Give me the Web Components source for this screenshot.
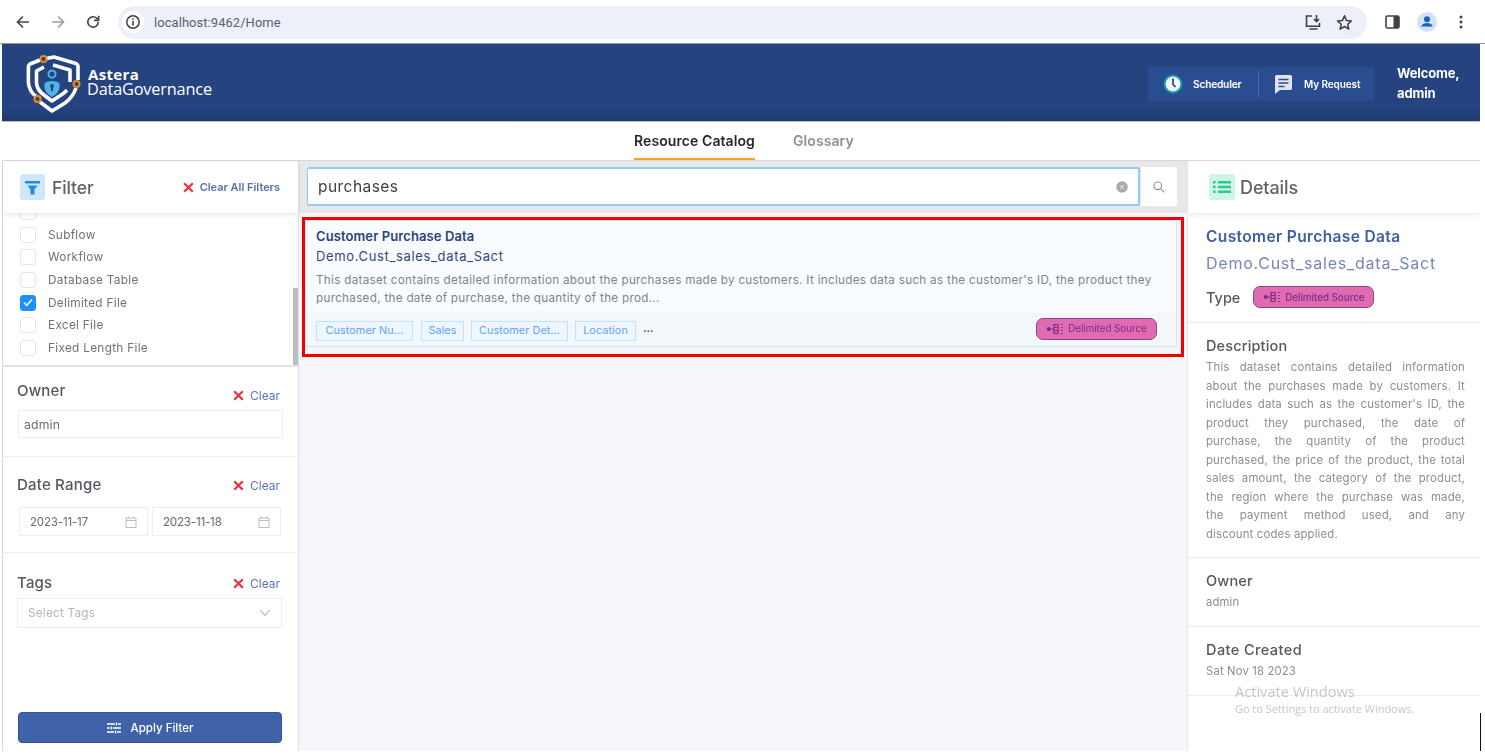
<!DOCTYPE html>
<html lang="en"><head><meta charset="utf-8"><title>Astera Data Governance</title>
<style>
html,body{margin:0;padding:0;background:#fff;overflow:hidden}
body{font-family:Inter,"Open Sans",sans-serif;color:#555}
</style></head><body>
<x-app>
  <x-browser-bar slot="bar" url="localhost:9462/Home"></x-browser-bar>
  <x-app-header slot="header"></x-app-header>
  <x-tabs slot="tabs"></x-tabs>
  <x-filter-panel slot="left"></x-filter-panel>
  <x-results slot="center"></x-results>
  <x-details slot="right"></x-details>
</x-app>
<script>
const def=(tag,html,init)=>customElements.define(tag,class extends HTMLElement{
  constructor(){super();this.attachShadow({mode:'open'}).innerHTML=html;}
  connectedCallback(){if(init)init(this,this.shadowRoot);}
});
const srcIcon=`<svg width="18" height="12" viewBox="0 0 18 12" fill="none" stroke="currentColor" stroke-width="1.2"><circle cx="2.6" cy="6" r="2" fill="currentColor" stroke="none"/><path d="M4 6h4M8 1.5h4v9H8zM8 4.5h4M8 7.5h4M15 1.5h1.6M15 4.5h1.6M15 7.5h1.6M15 10.5h1.6"/></svg>`;

def('x-app',`<style>
:host{display:block;width:1485px;height:755px;position:relative;background:#fff;overflow:hidden}
.wrap{height:751px;display:flex;flex-direction:column;filter:blur(.3px)}
.page{flex:1;min-height:0;margin:0 5px 0 2px;display:flex;flex-direction:column}
.main{flex:1;min-height:0;display:grid;grid-template-columns:296px 889px 293px;border-top:1px solid #d5d8df}
.wm{position:absolute;left:1235px;top:682px;color:#c6c6c8;font-family:"Open Sans",sans-serif}
.wm b{display:block;font-weight:400;font-size:14.6px;line-height:18px}
.wm i{display:block;font-style:normal;font-size:10.95px;line-height:16px;margin-top:1px}
.line{position:absolute;left:1479.5px;top:713px;width:1.5px;height:38px;background:#111}
</style><div class="wrap"><slot name="bar"></slot><div class="page"><slot name="header"></slot><slot name="tabs"></slot>
<div class="main"><slot name="left"></slot><slot name="center"></slot><slot name="right"></slot></div></div></div>
<div class="wm"><b>Activate Windows</b><i>Go to Settings to activate Windows.</i></div><div class="line"></div>`);

def('x-browser-bar',`<style>
:host{display:flex;align-items:center;height:43px;box-sizing:content-box;background:#fff;border-bottom:1px solid #8f939b}
.nav{width:35px;display:flex;justify-content:center;flex:none}
.left{display:flex;padding-left:5px;width:118px;box-sizing:border-box;flex:none}
.omni{width:1249px;height:33px;background:#edf0f8;border-radius:17px;display:flex;align-items:center;flex:none;margin-top:1px}
.info{width:22px;height:22px;border-radius:50%;background:#fff;margin-left:4px;display:flex;align-items:center;justify-content:center}
.url{font:12.9px Roboto,sans-serif;color:#5c5f66;margin-left:10px;flex:1;letter-spacing:.1px}
.ico{display:flex;width:31px;justify-content:center}
.r{display:flex;align-items:center;flex:none}
</style>
<div class="left">
<span class="nav"><svg width="16" height="16" viewBox="0 0 16 16" fill="none" stroke="#45484e" stroke-width="1.7"><path d="M14 8H2.5M8 2.5 2.5 8 8 13.5"/></svg></span>
<span class="nav"><svg width="16" height="16" viewBox="0 0 16 16" fill="none" stroke="#9a9ca1" stroke-width="1.6"><path d="M2 8h11.5M8 2.5 13.5 8 8 13.5"/></svg></span>
<span class="nav"><svg width="16" height="16" viewBox="0 0 16 16" fill="none" stroke="#45484e" stroke-width="1.7"><path d="M13.2 8A5.2 5.2 0 1 1 11.6 4.2L13.4 6"/><path d="M13.6 1.8v4.6H9" /></svg></span>
</div>
<div class="omni"><span class="info"><svg width="16" height="16" viewBox="0 0 16 16"><circle cx="8" cy="8" r="6.2" fill="none" stroke="#3d4046" stroke-width="1.5"/><path d="M7.2 7h1.6v4.6H7.2zM7.2 4.2h1.6v1.6H7.2z" fill="#3d4046"/></svg></span>
<span class="url" id="u"></span>
<span class="ico"><svg width="19" height="17" viewBox="0 0 19 17" fill="none" stroke="#3d4046" stroke-width="1.6"><path d="M8 2H2.5v10.2h13V9M5.5 15h8" /><path d="M12.5 1v6M10 5l2.5 2.6L15 5"/></svg></span>
<span class="ico" style="margin-right:7px"><svg width="17" height="17" viewBox="0 0 17 17" fill="none" stroke="#3d4046" stroke-width="1.5" stroke-linejoin="round"><path d="M8.5 1.8 10.5 6.4 15.5 6.9 11.7 10.2 12.9 15.1 8.5 12.5 4.1 15.1 5.3 10.2 1.5 6.9 6.5 6.4z"/></svg></span></div>
<div class="r" style="margin-left:18px"><svg width="15" height="14" viewBox="0 0 15 14"><rect x="1" y="1" width="13" height="12" rx="1.5" fill="none" stroke="#3d4046" stroke-width="1.6"/><rect x="8.5" y="1" width="5.5" height="12" fill="#3d4046"/></svg></div>
<div class="r" style="margin-left:17px"><svg width="20" height="20" viewBox="0 0 20 20"><circle cx="10" cy="10" r="10" fill="#d3e2fb"/><circle cx="10" cy="7.3" r="3" fill="#1c5fc4"/><path d="M4.2 14.5c1-2.6 3.4-3.4 5.8-3.4s4.8.8 5.8 3.4z" fill="#1c5fc4"/></svg></div>
<div class="r" style="margin-left:22px"><svg width="4" height="14" viewBox="0 0 4 14" fill="#3d4046"><circle cx="2" cy="2" r="1.5"/><circle cx="2" cy="7" r="1.5"/><circle cx="2" cy="12" r="1.5"/></svg></div>`,
(el,s)=>{s.getElementById('u').textContent=el.getAttribute('url');});

def('x-app-header',`<style>
:host{display:flex;align-items:center;height:78px;background:linear-gradient(#24437f 0,#24437f 84%,#1f3a70 100%);color:#fff;border-bottom:1px solid #b9bcc4;box-sizing:border-box}
.logo{margin-left:22px;display:block;flex:none}
.brand{margin-left:3px;margin-top:-1px;font-family:"Open Sans",sans-serif;line-height:1;flex:1}
.brand b{display:block;font-size:15px;font-weight:700;letter-spacing:.35px;line-height:14px;margin-left:1px}
.brand span{display:block;font-size:16.3px;font-weight:400;letter-spacing:-.17px;line-height:16px}
.actions{display:flex;align-items:center;width:226px;height:34px;background:#2a4d92;border-radius:3px;font-size:10px;font-weight:600;letter-spacing:-.1px;margin-top:3px}
.a1{display:flex;align-items:center;width:110px;padding-left:15px;box-sizing:border-box;gap:10px}
.div{width:1px;height:26px;background:#4f6ca6}
.a2{display:flex;align-items:center;padding-left:16px;gap:12px}
.welcome{width:83px;margin-left:23px;box-sizing:border-box;font-size:13px;font-weight:700;line-height:20px;margin-top:1px;letter-spacing:-.15px}
</style>
<svg class="logo" width="60" height="62" viewBox="0 0 60 62" fill="none" stroke="#fff" stroke-width="3.6" stroke-linejoin="round">
<path d="M16 8 6 12Q4.400 13 4.400 15V30Q5 40 13 45"/><path d="M22 6.500 30 5 52 11.500Q54 12.500 54 14V28"/><path d="M16 50 28 59 41 51Q49 45 52 36"/>
<path d="M20 15 12.500 19V31Q13 38 20 43L28 49 40 41 43 38"/><path d="M29 13 46 18V30"/>
<circle cx="19.500" cy="7" r="3" stroke="#ee8a22" stroke-width="2" fill="#24437f"/><circle cx="52.500" cy="32" r="3" stroke="#ee8a22" stroke-width="2" fill="#24437f"/><circle cx="13.500" cy="47" r="3" stroke="#ee8a22" stroke-width="2" fill="#24437f"/>
<circle cx="28" cy="22" r="3.600" stroke="#4fb4e8" stroke-width="2"/><path d="M20.500 31Q28 27 35.500 31V36Q34 42 28 45Q22 42 20.500 36Z" fill="#4fb4e8" stroke="none"/><circle cx="28" cy="34" r="2" fill="#24437f" stroke="none"/><path d="M27 34h2v5h-2z" fill="#24437f" stroke="none"/></svg>
<div class="brand"><b>Astera</b><span>DataGovernance</span></div>
<div class="actions"><div class="a1"><svg width="20" height="20" viewBox="0 0 20 20"><circle cx="10" cy="10" r="8.500" fill="#eef6f6" stroke="#0f9aa6" stroke-width="2"/><path d="M10 4.500V10.500L12.500 13" fill="none" stroke="#17305f" stroke-width="1.500"/></svg><span>Scheduler</span></div><div class="div"></div>
<div class="a2"><svg width="17" height="19" viewBox="0 0 17 19"><path d="M1.500 0h14A1.500 1.500 0 0 1 17 1.500v12a1.500 1.500 0 0 1-1.500 1.500H5L0 19V1.500A1.500 1.500 0 0 1 1.500 0z" fill="#dfe4ee"/><path d="M3.500 4.500h10M3.500 8h10M3.500 11.500h6" stroke="#2a4d92" stroke-width="1.300"/></svg><span>My Request</span></div></div>
<div class="welcome">Welcome,<br>admin</div>`);

def('x-tabs',`<style>
:host{display:flex;height:38px;justify-content:flex-start;background:#fff;font-size:14px;font-weight:600;letter-spacing:.08px}
.t{height:36px;line-height:38px;color:#26282c;margin-left:632px;width:121px;text-align:center;border-bottom:2px solid #f5a72c;white-space:nowrap}
.g{color:#8d9096;margin-left:38px;line-height:38px}
</style><div class="t">Resource Catalog</div><div class="g">Glossary</div>`);

def('x-clear',`<style>
:host{display:inline-flex;align-items:center;gap:6px;font-size:12px;color:#5a76ad}
svg{display:block}
</style><svg width="11" height="11" viewBox="0 0 11 11"><path d="M1.200 1.200 9.800 9.800M9.800 1.200 1.200 9.800" stroke="#e8363c" stroke-width="2.300"/></svg><slot></slot>`);

def('x-check',`<style>
:host{display:flex;align-items:center;height:22.6px;font-size:11.800px;color:#6d717c;padding-left:17px;letter-spacing:.3px}
.b{width:16px;height:16px;box-sizing:border-box;border:1px solid #e4e5e8;border-radius:3px;margin-right:12px;background:#fff;flex:none;display:flex;align-items:center;justify-content:center}
:host([checked]) .b{background:#1f8ffa;border-color:#1f8ffa}
svg{display:none}
:host([checked]) svg{display:block}
</style><span class="b"><svg width="10" height="9" viewBox="0 0 10 9" fill="none" stroke="#fff" stroke-width="1.600"><path d="M1 4.500 3.800 7.300 9 1.500"/></svg></span><slot></slot>`);

def('x-filter-section',`<style>
:host{display:block;padding:var(--pt,13px) 15px var(--pb,0) 14px;border-bottom:var(--bb,1px solid #eeeef0);height:var(--h);box-sizing:border-box}
.h{display:flex;justify-content:space-between;align-items:center;height:20px;font-size:15px;font-weight:500;color:#55585e;letter-spacing:.2px;padding-right:3px}
.b{margin-top:var(--gap,10px)}
x-clear{padding-top:var(--cs,0);letter-spacing:0;font-weight:400}
</style><div class="h"><slot name="label"></slot><x-clear>Clear</x-clear></div><div class="b"><slot></slot></div>`);

def('x-field',`<style>
:host{display:flex;align-items:center;justify-content:space-between;box-sizing:border-box;height:var(--fh,28px);border:1px solid #eceef0;background:#fff;padding:var(--fp,0 5px);font-size:var(--fs,12.200px);color:#666a72;letter-spacing:var(--ls,.2px);margin-left:var(--ml,1px);width:var(--w,265px)}
</style><slot></slot><slot name="end"></slot>`);

def('x-filter-panel',`<style>
:host{display:flex;flex-direction:column;min-height:0;background:#fff;border-left:1px solid #d3d9ea;box-shadow:1px 0 0 #dfe1e6;position:relative;z-index:1;box-sizing:border-box;height:100%}
.head{height:52px;flex:none;display:flex;align-items:center;padding:0 18px 0 17px;box-shadow:0 2px 4px rgba(60,60,70,.12);position:relative;z-index:1;background:#fff;border-radius:0 0 3px 3px}
.fi{width:25px;height:26px;background:#cfe6fb;border-radius:3px;display:flex;align-items:center;justify-content:center;flex:none}
.ti{font-size:17.500px;font-weight:500;color:#5f6268;margin-left:7px;flex:1;letter-spacing:-.1px}
.ca{font-size:11px;font-weight:600;color:#5570ac;letter-spacing:-.02px}
.list{height:152px;flex:none;display:flex;overflow:hidden;border-bottom:2px solid #e4e4e6;box-sizing:content-box}
.rows{flex:1;margin-top:-12px}
.track{width:5px;flex:none}
.thumb{width:5px;height:77px;margin-top:75px;background:#bbbdc2}
.dates{display:flex;gap:4px;margin-left:2px;--fh:29px;--w:129px;--ml:0;--fp:0 10px;--fs:11.500px;--ls:-.15px}
.cal{display:block}
.sel{color:#b4b7bc;--fh:30px;--w:265px;--ml:0;--fp:0 10px;--fs:11.800px}
.grow{flex:1;display:flex;flex-direction:column;justify-content:flex-end;min-height:0;padding:0 16px 8px 15px}
.btn{height:31px;background:#3f62a8;border:1px solid #35548f;border-radius:4px;color:#fff;display:flex;align-items:center;justify-content:center;gap:10px;font-size:11.500px;font-weight:500;box-sizing:border-box}
</style>
<div class="head"><span class="fi"><svg width="15" height="15" viewBox="0 0 15 15" fill="#1d8fe0"><path d="M0 1h15v2.500H0zM2.500 5.500h10L9.500 9.500v5h-4v-5z"/></svg></span><span class="ti">Filter</span>
<x-clear class="ca">Clear All Filters</x-clear></div>
<div class="list"><div class="rows"><x-check></x-check><x-check>Subflow</x-check><x-check>Workflow</x-check><x-check>Database Table</x-check><x-check checked>Delimited File</x-check><x-check>Excel File</x-check><x-check>Fixed Length File</x-check></div><div class="track"><div class="thumb"></div></div></div>
<x-filter-section style="--pt:13px;--gap:10px;--h:90px;--cs:10px"><span slot="label">Owner</span><x-field>admin</x-field></x-filter-section>
<x-filter-section style="--pt:17px;--gap:13px;--h:96px;--cs:2px"><span slot="label">Date Range</span><div class="dates">
<x-field>2023-11-17<svg slot="end" class="cal" width="12" height="12" viewBox="0 0 12 12" fill="none" stroke="#bcbec4"><path d="M1 2h10v9.500H1zM1 4.500h10M3.500 .5v2M8.500 .5v2"/></svg></x-field>
<x-field>2023-11-18<svg slot="end" class="cal" width="12" height="12" viewBox="0 0 12 12" fill="none" stroke="#bcbec4"><path d="M1 2h10v9.500H1zM1 4.500h10M3.500 .5v2M8.500 .5v2"/></svg></x-field></div></x-filter-section>
<x-filter-section style="--pt:19px;--gap:6px;--bb:0;--cs:2px"><span slot="label">Tags</span><x-field class="sel">Select Tags<svg slot="end" width="12" height="8" viewBox="0 0 12 8" fill="none" stroke="#b9bbc0" stroke-width="1.100"><path d="M1 1.200 6 6.500 11 1.200"/></svg></x-field></x-filter-section>
<div class="grow"><div class="btn"><svg width="14" height="12" viewBox="0 0 14 12" fill="none" stroke="#fff" stroke-width="1.300"><path d="M0 2h8M11 2h3M0 6h3M6 6h8M0 10h7M10 10h4M9.500 .5v3M4.500 4.500v3M8.500 8.500v3"/></svg>Apply Filter</div></div>`);

def('x-tag',`<style>
:host{display:inline-flex;align-items:center;justify-content:center;height:20px;box-sizing:border-box;background:#eef7ff;border:1px solid #bfe2fb;color:#65a3ef;font-size:10.800px;letter-spacing:.1px;white-space:nowrap}
</style><slot></slot>`);

def('x-badge',`<style>
:host{display:inline-flex;align-items:center;justify-content:center;gap:4px;width:121px;height:22px;box-sizing:border-box;background:#e06bb0;border:1.500px solid #8c4390;border-radius:7px;color:#7a2c86;font-size:9.800px;white-space:nowrap;letter-spacing:-.02px}
</style>${srcIcon}<slot></slot>`);

def('x-result-card',`<style>
:host{display:flex;flex-direction:column;height:127px;box-sizing:border-box;border:1px solid #cfe6f6;background:#f9fcfe}
.top{flex:1;padding:7px 10px 0}
.t{font-size:13px;font-weight:600;line-height:16px;color:#2d4279;letter-spacing:.1px}
.s{font-size:13px;line-height:16px;color:#34477f;margin-top:4px;letter-spacing:.65px;white-space:nowrap}
.d{font-size:11.700px;line-height:18px;color:#7f838b;margin-top:7px;white-space:nowrap;letter-spacing:.29px}
.foot{height:33px;flex:none;background:#f3f7f9;display:flex;align-items:center;padding:2px 19px 0 10px;box-sizing:border-box;gap:7px}
.more{color:#555;font-size:11px;font-weight:600;flex:1;margin-top:-5px}
x-badge{margin-top:-4px}
</style>
<div class="top"><div class="t">Customer Purchase Data</div><div class="s">Demo.Cust_sales_data_Sact</div>
<div class="d">This dataset contains detailed information about the purchases made by customers. It includes data such as the customer's ID, the product they<br>purchased, the date of purchase, the quantity of the prod...</div></div>
<div class="foot"><x-tag style="width:97px;margin-right:1px">Customer Nu...</x-tag><x-tag style="width:43px">Sales</x-tag><x-tag style="width:97px">Customer Det...</x-tag><x-tag style="width:61px">Location</x-tag><span class="more">...</span><x-badge>Delimited Source</x-badge></div>`);

def('x-results',`<style>
:host{display:flex;flex-direction:column;background:#f5f6f9;min-height:0}
.bar{height:52px;flex:none;background:#e8e8e9;padding:6px 10px 7px 9px;display:flex;box-sizing:border-box}
.in{width:833px;height:39px;box-sizing:border-box;border:2px solid #95c9f8;border-left-width:1px;background:#fff;border-radius:2px;display:flex;align-items:center;padding:0 10px;font-size:15.500px;color:#3c3f45;justify-content:space-between;letter-spacing:.45px}
.go{width:36px;height:39px;margin-left:1px;background:#fff;display:flex;align-items:center;justify-content:center;border-radius:0 2px 2px 0}
.hit{margin:4px 0 0 4px;width:882px;height:140px;box-sizing:border-box;border:3px solid #f40000;padding:0 4px 7px 0}
</style>
<div class="bar"><div class="in"><span>purchases</span><svg width="12" height="12" viewBox="0 0 12 12"><circle cx="6" cy="6" r="5.800" fill="#a9abad"/><path d="M4 4l4 4M8 4l-4 4" stroke="#e6e6e6" stroke-width="1"/></svg></div>
<div class="go"><svg width="12" height="12" viewBox="0 0 12 12" fill="none" stroke="#8b8d92" stroke-width="1.100"><circle cx="4.800" cy="4.800" r="3.800"/><path d="M7.800 7.800 11.300 11.300"/></svg></div></div>
<div class="hit"><x-result-card></x-result-card></div>`);

def('x-details',`<style>
:host{display:flex;flex-direction:column;background:#fff;border-left:1px solid #e4e6ee;box-sizing:border-box;height:100%;overflow:hidden}
.head{height:52px;flex:none;display:flex;align-items:center;padding-left:21px;box-shadow:0 2px 5px rgba(60,60,70,.1);font-size:18px;font-weight:500;color:#5f6268;gap:5px;letter-spacing:-.1px}
.ic{width:26px;height:26px;background:#cdf6e6;border-radius:3px;display:flex;align-items:center;justify-content:center}
section{padding:13px 15px 0 18px;border-bottom:1px solid #ecedf0;box-sizing:border-box;flex:none}
h4{margin:0;font-size:14.500px;font-weight:500;line-height:20px;color:#55585e;letter-spacing:.15px}
h4.w{letter-spacing:.42px}
.t{font-size:15.500px;font-weight:600;line-height:20px;color:#3e5da3;letter-spacing:.38px;white-space:nowrap;padding-top:1px}
.s{font-size:16px;line-height:20px;color:#7885ba;margin-top:6px;letter-spacing:.76px;white-space:nowrap}
.ty{display:flex;align-items:center;gap:13px;height:22px;margin-top:13px;font-size:14.500px;font-weight:500;color:#55585e}
.desc{font-size:11.400px;line-height:18.500px;color:#8b8e95;margin-top:2px;letter-spacing:.15px}
.desc span{display:block;text-align:justify;text-align-last:justify;white-space:nowrap}
.desc span:last-child{text-align-last:left}
.v{font-size:11.300px;line-height:18px;color:#8b8e95;letter-spacing:.15px}
</style>
<div class="head"><span class="ic"><svg width="18" height="14" viewBox="0 0 18 14" fill="#2fc98f"><path d="M0 1h2.500v2.400H0zM5 1h13v2.400H5zM0 5.800h2.500v2.400H0zM5 5.800h13v2.400H5zM0 10.600h2.500V13H0zM5 10.600h13V13H5z"/></svg></span>Details</div>
<section style="height:110px"><div class="t">Customer Purchase Data</div><div class="s">Demo.Cust_sales_data_Sact</div><div class="ty">Type<x-badge>Delimited Source</x-badge></div></section>
<section style="height:235px"><h4>Description</h4><div class="desc"><span>This dataset contains detailed information</span><span>about the purchases made by customers. It</span><span>includes data such as the customer's ID, the</span><span>product they purchased, the date of</span><span>purchase, the quantity of the product</span><span>purchased, the price of the product, the total</span><span>sales amount, the category of the product,</span><span>the region where the purchase was made,</span><span>the payment method used, and any</span><span>discount codes applied.</span></div></section>
<section style="height:69px"><h4>Owner</h4><div class="v" style="margin-top:2px">admin</div></section>
<section style="height:69px"><h4 class="w">Date Created</h4><div class="v" style="margin-top:2px">Sat Nov 18 2023</div></section>`);
</script>
</body></html>
